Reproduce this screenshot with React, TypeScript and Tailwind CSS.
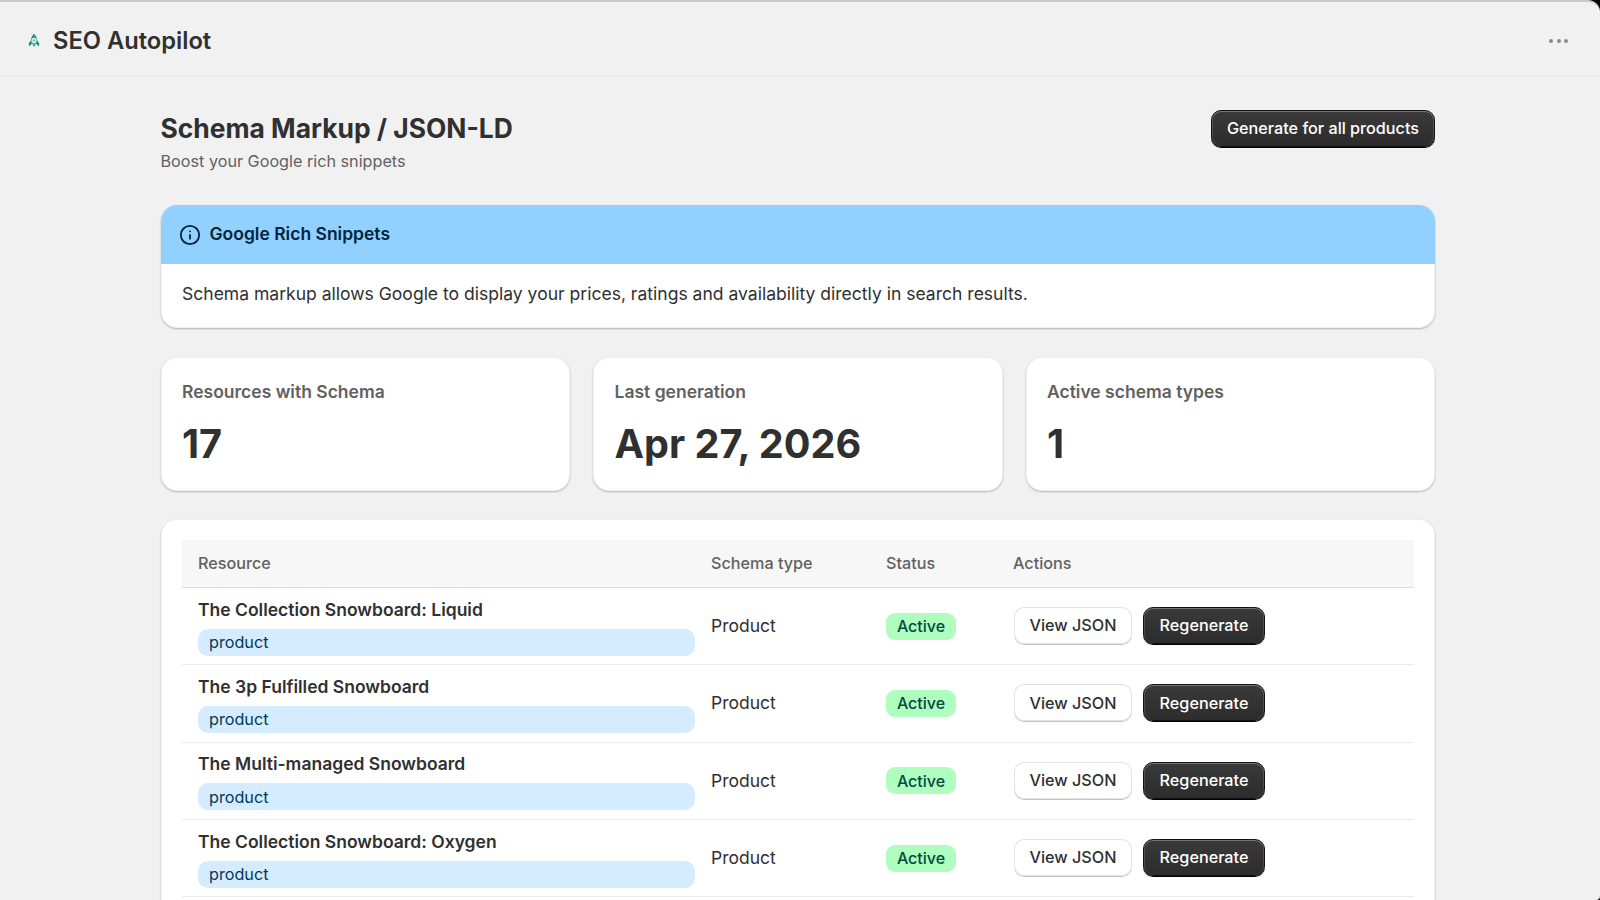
import { Info } from "lucide-react"

const rows = [
  "The Collection Snowboard: Liquid",
  "The 3p Fulfilled Snowboard",
  "The Multi-managed Snowboard",
  "The Collection Snowboard: Oxygen",
]

const stats = [
  { label: "Resources with Schema", value: "17" },
  { label: "Last generation", value: "Apr 27, 2026" },
  { label: "Active schema types", value: "1" },
]

const cardShadow = "shadow-[0_1px_2px_rgba(0,0,0,0.25),inset_0_0_0_1px_rgba(0,0,0,0.06)]"
const darkButton =
  "rounded-[10px] border border-[#121212] bg-gradient-to-b from-[#3a3a3a] to-[#2c2c2c] text-white font-medium shadow-[inset_0_1px_0_rgba(255,255,255,0.3),inset_1px_0_0_rgba(255,255,255,0.14),inset_-1px_0_0_rgba(255,255,255,0.14),0_1px_0_#000]"

function RocketLogo() {
  return (
    <svg width="12" height="14.5" viewBox="0 0 14 16" className="shrink-0">
      <path d="M7 0.5C5 2.5 3.4 5 3.4 8L3.6 12H10.4L10.6 8C10.6 5 9 2.5 7 0.5Z" fill="#1a9a84" />
      <path d="M3.4 8L0.8 12L1.2 15L4 12.8ZM10.6 8L13.2 12L12.8 15L10 12.8Z" fill="#148a76" />
      <circle cx="7" cy="8.2" r="3" fill="#e8f5f2" />
      <circle cx="7" cy="8.2" r="1.5" fill="#7cc7b8" />
      <path d="M5 12.6H9L7 15.8Z" fill="#1f9d86" />
    </svg>
  )
}

export default function App() {
  return (
    <div className="h-[900px] w-full overflow-hidden bg-black font-['Inter',sans-serif] text-[#303030]">
      <div className="flex h-[900px] flex-col rounded-tr-[12px] rounded-br-[4px] border-t-2 border-[#c9c9c9] bg-[#f1f1f1]">
        {/* App title bar */}
        <header className="flex h-[75px] shrink-0 items-center justify-between border-b border-[#e8e8e8] pl-[28px] pr-[32px] pt-[3px]">
          <div className="flex items-center gap-[13px]">
            <RocketLogo />
            <span className="text-[23.7px] font-semibold leading-none">SEO Autopilot</span>
          </div>
          <div className="flex gap-[3.5px]">
            <span className="h-[4px] w-[4px] rounded-full bg-[#8a8a8a]" />
            <span className="h-[4px] w-[4px] rounded-full bg-[#8a8a8a]" />
            <span className="h-[4px] w-[4px] rounded-full bg-[#8a8a8a]" />
          </div>
        </header>

        <main className="flex min-h-0 flex-1 flex-col pl-[160.5px] pr-[165px] pt-[32px]">
          {/* Page heading */}
          <div className="flex shrink-0 items-start justify-between">
            <div>
              <h1 className="pt-[1px] text-[26.4px] font-bold leading-[36px]">Schema Markup / JSON-LD</h1>
              <p className="mt-[3px] text-[16.2px] leading-[24px] text-[#616161]">Boost your Google rich snippets</p>
            </div>
            <button className={`${darkButton} mt-[1px] h-[37px] w-[224px] text-[16.2px]`}>Generate for all products</button>
          </div>

          {/* Banner */}
          <section className={`mt-[32px] shrink-0 overflow-hidden rounded-[16px] bg-white ${cardShadow}`}>
            <div className="flex h-[59px] items-center gap-[8.5px] bg-[#91d0ff] pl-[18.5px] text-[#00253d]">
              <Info size={22} strokeWidth={2} />
              <span className="text-[17.5px] font-semibold">Google Rich Snippets</span>
            </div>
            <p className="flex h-[64px] items-center pb-[4px] pl-[21.5px] text-[17.55px]">
              Schema markup allows Google to display your prices, ratings and availability directly in search results.
            </p>
          </section>

          {/* Stats */}
          <div className="mt-[29px] grid shrink-0 grid-cols-3 gap-[23px]">
            {stats.map((stat) => (
              <div key={stat.label} className={`h-[134px] rounded-[16px] bg-white pl-[21.5px] pt-[25px] ${cardShadow}`}>
                <div className="text-[17.5px] font-semibold leading-[20px] text-[#616161]">{stat.label}</div>
                <div className="mt-[16px] text-[39.6px] font-bold leading-[52px]">{stat.value}</div>
              </div>
            ))}
          </div>

          {/* Resource table */}
          <section className={`mt-[28px] min-h-[500px] shrink-0 rounded-[16px] bg-white pl-[21.5px] pr-[21px] pt-[21px] ${cardShadow}`}>
            <div className="grid h-[48px] grid-cols-[529px_175px_127px_1fr] items-center border-b border-[#dfdfdf] bg-[#f7f7f7] text-[16.2px] font-medium text-[#616161]">
              <span className="pl-[16px]">Resource</span>
              <span>Schema type</span>
              <span>Status</span>
              <span>Actions</span>
            </div>
            {rows.map((name) => (
              <div
                key={name}
                className="grid h-[77.3px] grid-cols-[529px_175px_127px_1fr] items-center border-b border-[#ebebeb] text-[17.5px]"
              >
                <div className="px-[16px] pt-[2px]">
                  <div className="text-[17.5px] font-semibold leading-[22px]">{name}</div>
                  <div className="mt-[8px] flex h-[27px] items-center rounded-[10px] bg-[#d5ebff] pl-[11px] text-[16.2px] text-[#003a5a]">
                    product
                  </div>
                </div>
                <span>Product</span>
                <div>
                  <span className="inline-flex h-[27px] w-[70px] items-center justify-center rounded-[9px] bg-[#affebf] text-[16px] font-[450] text-[#014b40]">
                    Active
                  </span>
                </div>
                <div className="flex items-center gap-[11px] pb-[1px]">
                  <button className="ml-[1px] h-[37px] w-[118px] rounded-[10px] bg-white text-[16.2px] font-medium shadow-[0_1px_0_#c4c4c4,inset_0_0_0_1px_#e3e3e3]">
                    View JSON
                  </button>
                  <button className={`${darkButton} h-[37px] w-[122px] text-[16.2px]`}>Regenerate</button>
                </div>
              </div>
            ))}
          </section>
        </main>
      </div>
    </div>
  )
}
